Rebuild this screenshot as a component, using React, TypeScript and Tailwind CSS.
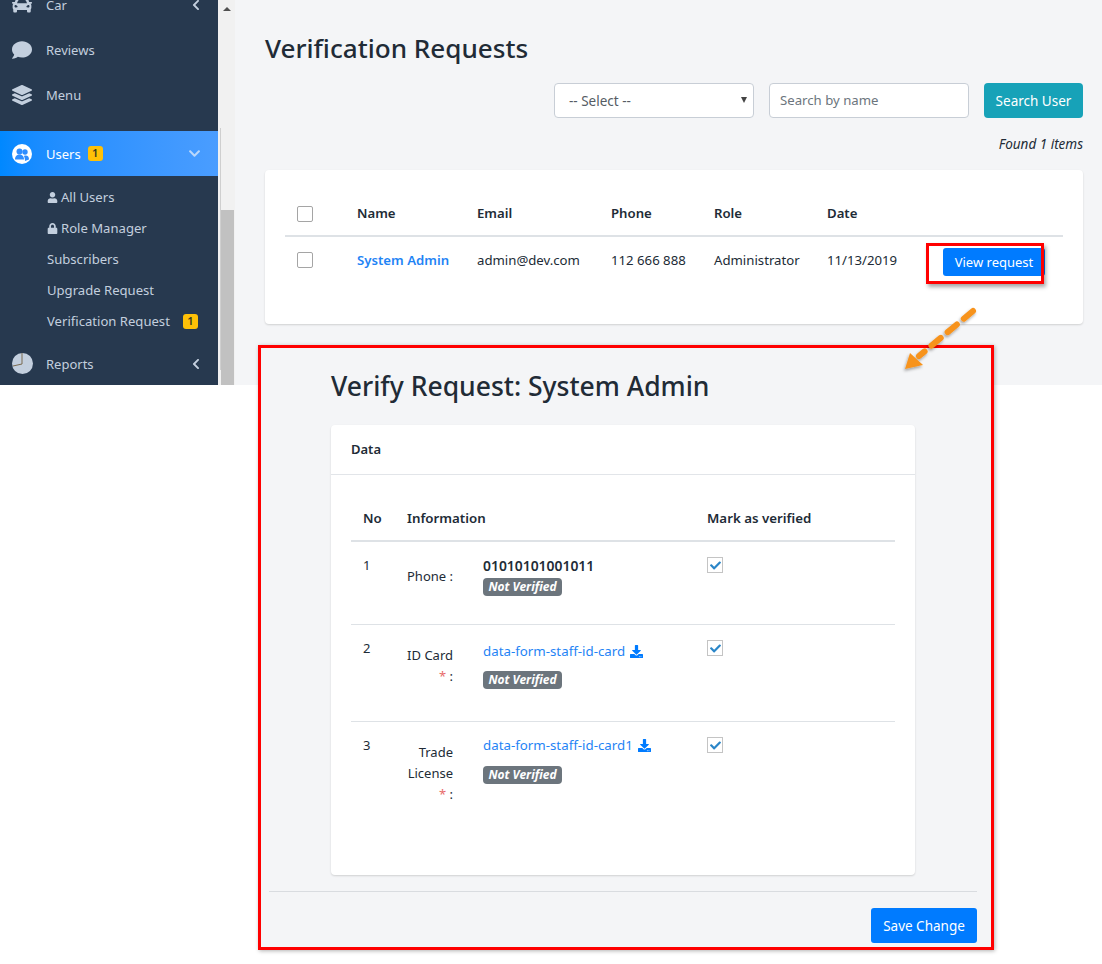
import type { ReactNode } from "react";
import { FaCar, FaComment, FaLayerGroup, FaUser, FaLock, FaChevronLeft, FaChevronDown, FaDownload, FaCheck } from "react-icons/fa";

function NavRow({ icon, label, chevron }: { icon: ReactNode; label: string; chevron?: boolean }) {
  return (
    <div className="flex h-[45px] items-center text-[#c3cfde]">
      <div className="mr-[2px] flex w-[44px] justify-center text-[20px]">{icon}</div>
      <span className="pt-[2px] text-[13px]">{label}</span>
      {chevron && <FaChevronLeft className="ml-auto mr-[16px] text-[12px]" />}
    </div>
  );
}

function YellowBadge({ className }: { className?: string }) {
  return (
    <span className={"flex h-[15px] w-[15px] items-center justify-center rounded-[3px] bg-[#ffc107] text-[11px] font-semibold text-[#3a3a20] " + (className ?? "")}>1</span>
  );
}

function NotVerified() {
  return (
    <span className="inline-flex h-[18px] w-[79px] items-center justify-center rounded-[4px] bg-[#6c757d] text-[12px] font-bold italic text-white">Not Verified</span>
  );
}

function Check() {
  return (
    <span className="flex h-[16px] w-[16px] items-center justify-center border border-[#c4c4c4] bg-white text-[11px] text-[#2a86c8]">
      <FaCheck />
    </span>
  );
}

function FileLink({ name }: { name: string }) {
  return (
    <span className="flex items-center gap-[5px] text-[13.3px] leading-[18px] text-[#1f84f5]">
      {name}
      <FaDownload className="text-[13px] text-[#007bff]" />
    </span>
  );
}

function Required() {
  return (
    <div>
      <span className="text-[#e86a6a]">*</span> :
    </div>
  );
}

export default function App() {
  return (
    <div className="relative h-[964px] w-[1102px] overflow-hidden bg-white font-['Noto_Sans',sans-serif] text-[#212b36]">
      <div className="flex h-[385px] overflow-hidden">
        <aside className="h-[385px] w-[218px] shrink-0 overflow-hidden bg-[#27394f]">
          <div className="-mt-[18px]">
            <NavRow icon={<FaCar />} label="Car" chevron />
            <NavRow icon={<FaComment />} label="Reviews" />
            <NavRow icon={<FaLayerGroup />} label="Menu" />
          </div>
          <div className="mt-[14px] flex h-[45px] items-center bg-gradient-to-r from-[#0088ff] to-[#4a9dff] text-white">
            <div className="mr-[2px] flex w-[44px] justify-center">
              <svg width="20" height="20" viewBox="0 0 20 20">
                <circle cx="10" cy="10" r="10" fill="#fff" />
                <circle cx="7.500" cy="7.500" r="3" fill="#2f8dff" />
                <path d="M3 15.500c0-3.500 2-5 4.500-5s4.500 1.500 4.500 5z" fill="#2f8dff" />
                <circle cx="13" cy="8" r="2.700" fill="#2f8dff" />
                <path d="M13 17c0-3-1-4.500-1-5 .5-.5 1-.5 1.500-.5 2.500 0 3.500 1.500 3.500 4z" fill="#2f8dff" />
              </svg>
            </div>
            <span className="pt-[2px] text-[13px]">Users</span>
            <YellowBadge className="ml-[7px]" />
            <FaChevronDown className="ml-auto mr-[17px] text-[13px] text-[#b9d7fb]" />
          </div>
          <div className="pt-[6px] text-[13.1px] text-[#c3cfde]">
            <div className="flex h-[31px] items-center gap-[3px] pl-[47px]"><FaUser className="text-[11px]" />All Users</div>
            <div className="flex h-[31px] items-center gap-[3px] pl-[47px]"><FaLock className="text-[11px]" />Role Manager</div>
            <div className="flex h-[31px] items-center pl-[47px]">Subscribers</div>
            <div className="flex h-[31px] items-center pl-[47px]">Upgrade Request</div>
            <div className="flex h-[31px] items-center pl-[47px]">Verification Request<YellowBadge className="ml-auto mr-[20px]" /></div>
          </div>
          <div className="mt-[4px]">
            <NavRow
              icon={
                <svg width="21" height="21" viewBox="0 0 21 21">
                  <circle cx="10.500" cy="10.500" r="10.500" fill="#c3cfde" />
                  <path d="M10 0v11L1 13" fill="none" stroke="#7a6a50" strokeWidth="1" />
                </svg>
              }
              label="Reports"
              chevron
            />
          </div>
        </aside>
        <div className="relative flex w-[17px] shrink-0 flex-col bg-[#f1f1f1] pl-[3px]">
          <span className="absolute left-[2px] top-[128px] h-[242px] w-px bg-[#cfcfcf]" />
          <div className="flex h-[17px] items-center justify-center pr-[2px]">
            <span className="h-0 w-0 border-x-[4px] border-b-[4px] border-x-transparent border-b-[#505050]" />
          </div>
          <div className="mt-[193px] h-[175px] w-[13px] bg-[#c1c1c1]" />
        </div>
        <main className="flex-1 bg-[#f4f5f7] pl-[30px] pr-[19px]">
          <h1 className="pt-[29px] text-[26.100px] font-medium leading-[38px]">Verification Requests</h1>
          <div className="mt-[16px] flex justify-end gap-[15px]">
            <div className="relative flex h-[35px] w-[200px] items-center rounded-[4px] border border-[#c8ced6] bg-white pl-[14px] pt-[1px] text-[13.5px] text-[#555c64]">
              -- Select --
              <span className="absolute right-[6px] top-[13px] h-0 w-0 border-x-[3.500px] border-t-[6px] border-x-transparent border-t-[#444]" />
            </div>
            <div className="flex h-[35px] w-[200px] items-center rounded-[4px] border border-[#c8ced6] bg-white pl-[10px] pt-[1px] text-[13.2px] text-[#6c757d]">Search by name</div>
            <div className="flex h-[35px] w-[99px] items-center justify-center rounded-[4px] bg-[#17a2b8] pt-[1px] text-[13.5px] text-white">Search User</div>
          </div>
          <div className="mt-[16px] text-right text-[13.5px] italic leading-[20px]">Found 1 items</div>
          <div className="mt-[16px] h-[154px] rounded-[4px] bg-white px-[20px] pt-[24px] shadow-[0_1px_2px_rgba(0,0,0,0.15)]">
            <div className="grid h-[43px] grid-cols-[72px_120px_134px_103px_113px_1fr] items-center border-b-2 border-[#dee2e6] pb-[2px] text-[13.2px] font-semibold">
              <span className="ml-[12px] h-[16px] w-[16px] rounded-[2px] border border-[#a5a5a5] bg-white" />
              <span>Name</span>
              <span>Email</span>
              <span>Phone</span>
              <span>Role</span>
              <span>Date</span>
            </div>
            <div className="grid h-[48px] grid-cols-[72px_120px_134px_103px_113px_1fr] items-center text-[13.2px]">
              <span className="-mt-[2px] ml-[12px] h-[16px] w-[16px] rounded-[2px] border border-[#a5a5a5] bg-white" />
              <span className="font-semibold text-[#1f84f5]">System Admin</span>
              <span>admin@dev.com</span>
              <span>112 666 888</span>
              <span>Administrator</span>
              <span>11/13/2019</span>
            </div>
          </div>
        </main>
      </div>

      {/* call-out: highlighted button */}
      <div className="absolute left-[943px] top-[248px] flex h-[28px] w-[102px] items-center justify-center rounded-[3px] bg-[#007bff] pt-[2px] text-[13px] text-white">View request</div>
      <div className="absolute left-[926px] top-[243px] h-[41px] w-[118px] border-[3px] border-[#ff0000] shadow-[2px_3px_4px_rgba(0,0,0,0.35)]" />

      {/* call-out: verify panel */}
      <section className="absolute left-[258px] top-[345px] flex h-[605px] w-[736px] flex-col border-[3px] border-[#ff0000] bg-[#f4f5f7] shadow-[1px_1px_4px_rgba(0,0,0,0.3)]">
        <h2 className="pl-[70px] pt-[19px] text-[26.500px] font-medium leading-[38px]">Verify Request: System Admin</h2>
        <div className="ml-[70px] mt-[20px] h-[450px] w-[584px] rounded-[4px] bg-white shadow-[0_1px_2px_rgba(0,0,0,0.15)]">
          <div className="flex h-[50px] items-center border-b border-[#e2e5e9] pl-[20px] pt-[1px] text-[13px] font-semibold">Data</div>
          <div className="px-[20px] pt-[23px]">
            <div className="grid h-[44px] grid-cols-[56px_300px_1fr] items-center border-b-2 border-[#dee2e6] text-[13.3px] font-semibold">
              <span className="pl-[12px]">No</span>
              <span>Information</span>
              <span>Mark as verified</span>
            </div>
            <div className="grid h-[83px] grid-cols-[56px_46px_30px_224px_1fr] border-b border-[#dee2e6] text-[13px] leading-[21px]">
              <div className="pl-[12px] pt-[13px]">1</div>
              <div className="pt-[24px] text-right">Phone :</div>
              <div />
              <div className="pt-[13px]">
                <div className="text-[13.900px] font-semibold leading-[21px]">01010101001011</div>
                <NotVerified />
              </div>
              <div className="pt-[15px]"><Check /></div>
            </div>
            <div className="grid h-[97px] grid-cols-[56px_46px_30px_224px_1fr] border-b border-[#dee2e6] text-[13px] leading-[21px]">
              <div className="pl-[12px] pt-[13px]">2</div>
              <div className="pt-[20px] text-right">ID Card<Required /></div>
              <div />
              <div className="pt-[17px]">
                <FileLink name="data-form-staff-id-card" />
                <div className="mt-[9px]"><NotVerified /></div>
              </div>
              <div className="pt-[15px]"><Check /></div>
            </div>
            <div className="grid h-[100px] grid-cols-[56px_46px_30px_224px_1fr] text-[13px] leading-[21px]">
              <div className="pl-[12px] pt-[13px]">3</div>
              <div className="pt-[20px] text-right">Trade License<Required /></div>
              <div />
              <div className="pt-[14px]">
                <FileLink name="data-form-staff-id-card1" />
                <div className="mt-[10px]"><NotVerified /></div>
              </div>
              <div className="pt-[15px]"><Check /></div>
            </div>
          </div>
        </div>
        <div className="ml-[8px] mr-[14px] mt-[16px] border-t border-[#d9dce0]" />
        <div className="flex justify-end pr-[14px] pt-[16px]">
          <div className="flex h-[35px] w-[106px] items-center justify-center rounded-[3px] bg-[#007bff] pt-[1px] text-[13.500px] text-white">Save Change</div>
        </div>
      </section>

      {/* arrow */}
      <svg className="absolute left-[895px] top-[300px]" width="90" height="80" viewBox="0 0 90 80">
        <defs>
          <filter id="s" x="-30%" y="-30%" width="160%" height="160%">
            <feDropShadow dx="-1" dy="2" stdDeviation="1.500" floodColor="#000" floodOpacity="0.35" />
          </filter>
        </defs>
        <g filter="url(#s)">
          <path d="M78 11 L24 56" stroke="#f7931e" strokeWidth="6" strokeDasharray="12 9" strokeLinecap="round" fill="none" />
          <path d="M10 69 L15 53 L28 65 Z" fill="#f7931e" />
        </g>
      </svg>
    </div>
  );
}
